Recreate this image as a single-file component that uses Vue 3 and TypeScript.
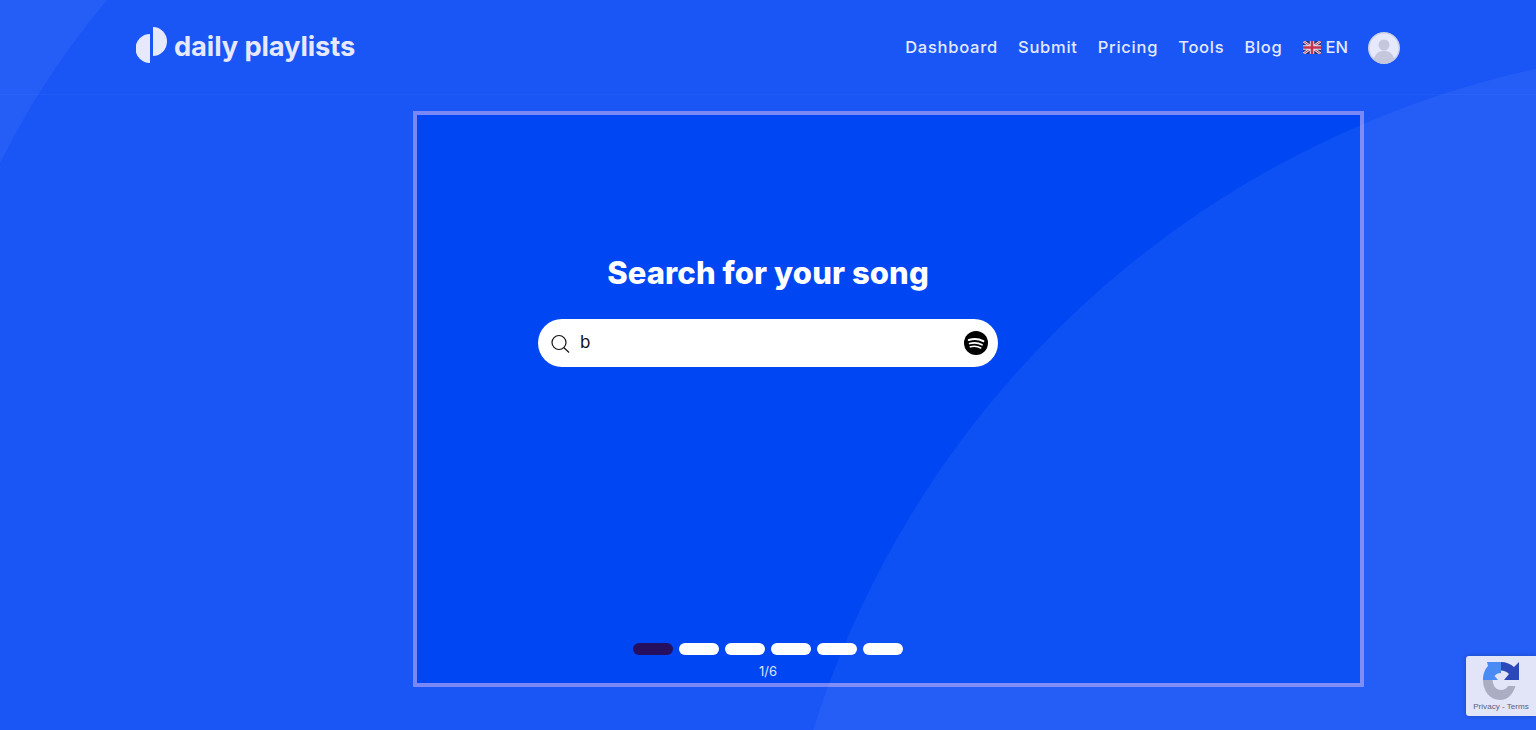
<script setup lang="ts">
const navItems: string[] = ['Dashboard', 'Submit', 'Pricing', 'Tools', 'Blog']
const steps: number[] = [1, 2, 3, 4, 5, 6]
</script>

<template>
  <div class="page">
    <header class="header">
      <a class="brand">
        <svg class="brand-mark" viewBox="0 0 31 36" width="31" height="36">
          <path d="M14 7A14.500 14.500 0 0 0 14 36Z" fill="#e6e9fc" />
          <path d="M17 0A14 14.500 0 0 1 17 29Z" fill="#e6e9fc" />
        </svg>
        <span class="brand-name">daily playlists</span>
      </a>
      <nav class="nav">
        <a v-for="item in navItems" :key="item" class="nav-link">{{ item }}</a>
        <a class="nav-link lang">
          <svg class="flag" viewBox="0 0 18 13" width="18" height="13">
            <rect width="18" height="13" fill="#27337f" />
            <path d="M0 0L18 13M18 0L0 13" stroke="#e6e6f0" stroke-width="2.600" />
            <path d="M0 0L18 13M18 0L0 13" stroke="#c8324f" stroke-width="1" />
            <path d="M9 0V13M0 6.500H18" stroke="#e6e6f0" stroke-width="4.400" />
            <path d="M9 0V13M0 6.500H18" stroke="#c8324f" stroke-width="2.600" />
          </svg>
          EN
        </a>
        <span class="avatar">
          <svg viewBox="0 0 32 32" width="32" height="32">
            <circle cx="16" cy="16" r="15.250" fill="#e6e9fb" stroke="#c9cde6" stroke-width="1.500" />
            <circle cx="16" cy="13" r="5.500" fill="#c5c8dc" />
            <path d="M5.500 27.500C7 21.500 11 19 16 19s9 2.500 10.500 8.500A15 15 0 0 1 5.500 27.500Z" fill="#c5c8dc" />
          </svg>
        </span>
      </nav>
    </header>

    <main class="main">
      <section class="card">
        <div class="column">
          <h1 class="title">Search for your song</h1>
          <div class="search">
            <svg class="search-icon" viewBox="0 0 20 20" width="20" height="20">
              <circle cx="9" cy="8.500" r="7" fill="none" stroke="#111" stroke-width="1.200" />
              <path d="M14 13.800L19 18.500" stroke="#111" stroke-width="1.200" />
            </svg>
            <span class="query">b</span>
            <svg class="spotify" viewBox="0 0 24 24" width="24" height="24">
              <circle cx="12" cy="12" r="12" fill="#000" />
              <path d="M4.800 8.900C9.500 7.500 15 7.800 19.300 10.200" fill="none" stroke="#fff" stroke-width="2.100" stroke-linecap="round" />
              <path d="M5.600 12.500C9.700 11.400 14.500 11.800 18 13.800" fill="none" stroke="#fff" stroke-width="1.800" stroke-linecap="round" />
              <path d="M6.300 15.800C9.800 15 13.700 15.300 16.800 17" fill="none" stroke="#fff" stroke-width="1.500" stroke-linecap="round" />
            </svg>
          </div>
          <div class="steps">
            <span v-for="s in steps" :key="s" class="step" :class="{ active: s === 1 }"></span>
          </div>
          <div class="count">1/6</div>
        </div>
      </section>
    </main>

    <svg class="waves" viewBox="0 0 1536 730" width="1536" height="730">
      <path d="M107 0A820 820 0 0 0 0 163V0Z" fill="#fff" fill-opacity="0.05" />
      <circle cx="1746" cy="1024" r="978" fill="#fff" fill-opacity="0.05" />
    </svg>

    <aside class="recaptcha">
      <svg viewBox="0 0 37 39" width="37" height="39">
        <path d="M0 18C0 12 2 7 5 4L4 0H18V11C15 11 13 12 11.500 14L15 18Z" fill="#4a8af4" />
        <path d="M18 0C23 0 28 2 31 5L36 0V18H21L26 12C24 10 21 8.500 18 8.500Z" fill="#2a48b8" />
        <path d="M0 18H9.500C10 24 13 28 18 28C21.500 28 24 26 25 24H32.500C30 32 25 38 17 38C7 38 0 29 0 18Z" fill="#abadc2" />
      </svg>
      <span class="recaptcha-text">Privacy - Terms</span>
    </aside>
  </div>
</template>

<style scoped>
.page {
  position: relative;
  width: 1536px;
  height: 730px;
  overflow: hidden;
  background: #1a56f6;
  font-family: Inter, "Open Sans", sans-serif;
}
.header {
  box-sizing: border-box;
  height: 95px;
  padding: 0 136px;
  display: flex;
  align-items: flex-start;
  justify-content: space-between;
  border-bottom: 1px solid rgba(255, 255, 255, 0.03);
}
.brand {
  display: flex;
  align-items: flex-start;
  gap: 7px;
  padding-top: 27px;
}
.brand-mark {
  flex: none;
}
.brand-name {
  margin-top: 2px;
  font-size: 27.300px;
  line-height: 36px;
  font-weight: 700;
  letter-spacing: -0.1px;
  color: #e6e9fc;
}
.nav {
  display: flex;
  align-items: center;
  gap: 20px;
  height: 94px;
}
.nav-link {
  font-size: 16.500px;
  font-weight: 500;
  letter-spacing: 0.75px;
  color: #e6e9fc;
}
.lang {
  display: flex;
  align-items: center;
  gap: 5px;
  letter-spacing: 0;
}
.flag {
  flex: none;
}
.avatar {
  display: block;
  width: 32px;
  height: 32px;
  margin-top: 2px;
}
.main {
  padding: 16px 0 0 413px;
}
.card {
  box-sizing: border-box;
  width: 951px;
  height: 576px;
  border: 4px solid #7a87f7;
  background: #0047f3;
}
.column {
  width: 702px;
  height: 100%;
  display: flex;
  flex-direction: column;
  align-items: center;
  padding-top: 135px;
  box-sizing: border-box;
}
.title {
  margin: 0;
  font-size: 31px;
  line-height: 45px;
  font-weight: 800;
  letter-spacing: 0.1px;
  color: #fff;
}
.search {
  box-sizing: border-box;
  width: 460px;
  height: 48px;
  margin-top: 24px;
  padding: 0 10px 0 12px;
  display: flex;
  align-items: center;
  background: #fff;
  border-radius: 24px;
}
.search-icon {
  flex: none;
  margin-top: 2px;
}
.query {
  margin: -2px 0 0 10px;
  flex: 1;
  font-size: 17px;
  font-weight: 400;
  color: #111;
}
.spotify {
  flex: none;
  margin-top: -1px;
}
.steps {
  display: flex;
  gap: 6px;
  margin-top: 276px;
}
.step {
  width: 40px;
  height: 12px;
  border-radius: 6px;
  background: #fff;
}
.step.active {
  background: #260f5f;
}
.count {
  margin-top: 8px;
  font-size: 13px;
  line-height: 16px;
  color: #dfe4fb;
}
.waves {
  position: absolute;
  top: 0;
  left: 0;
  pointer-events: none;
}
.recaptcha {
  position: absolute;
  left: 1466px;
  top: 656px;
  width: 70px;
  height: 60px;
  box-sizing: border-box;
  background: #e2e4f7;
  border-radius: 3px 0 0 3px;
  box-shadow: 0 0 4px rgba(20, 30, 90, 0.35);
  display: flex;
  flex-direction: column;
  align-items: center;
  padding-top: 6px;
}
.recaptcha svg {
  flex: none;
  margin-left: 1px;
}
.recaptcha-text {
  margin-top: 1px;
  font-family: "Liberation Sans", sans-serif;
  font-size: 8.100px;
  line-height: 10px;
  color: #5d6080;
  white-space: nowrap;
}
</style>

<style>
html,
body {
  margin: 0;
  background: #1a56f6;
  overflow: hidden;
}
</style>
